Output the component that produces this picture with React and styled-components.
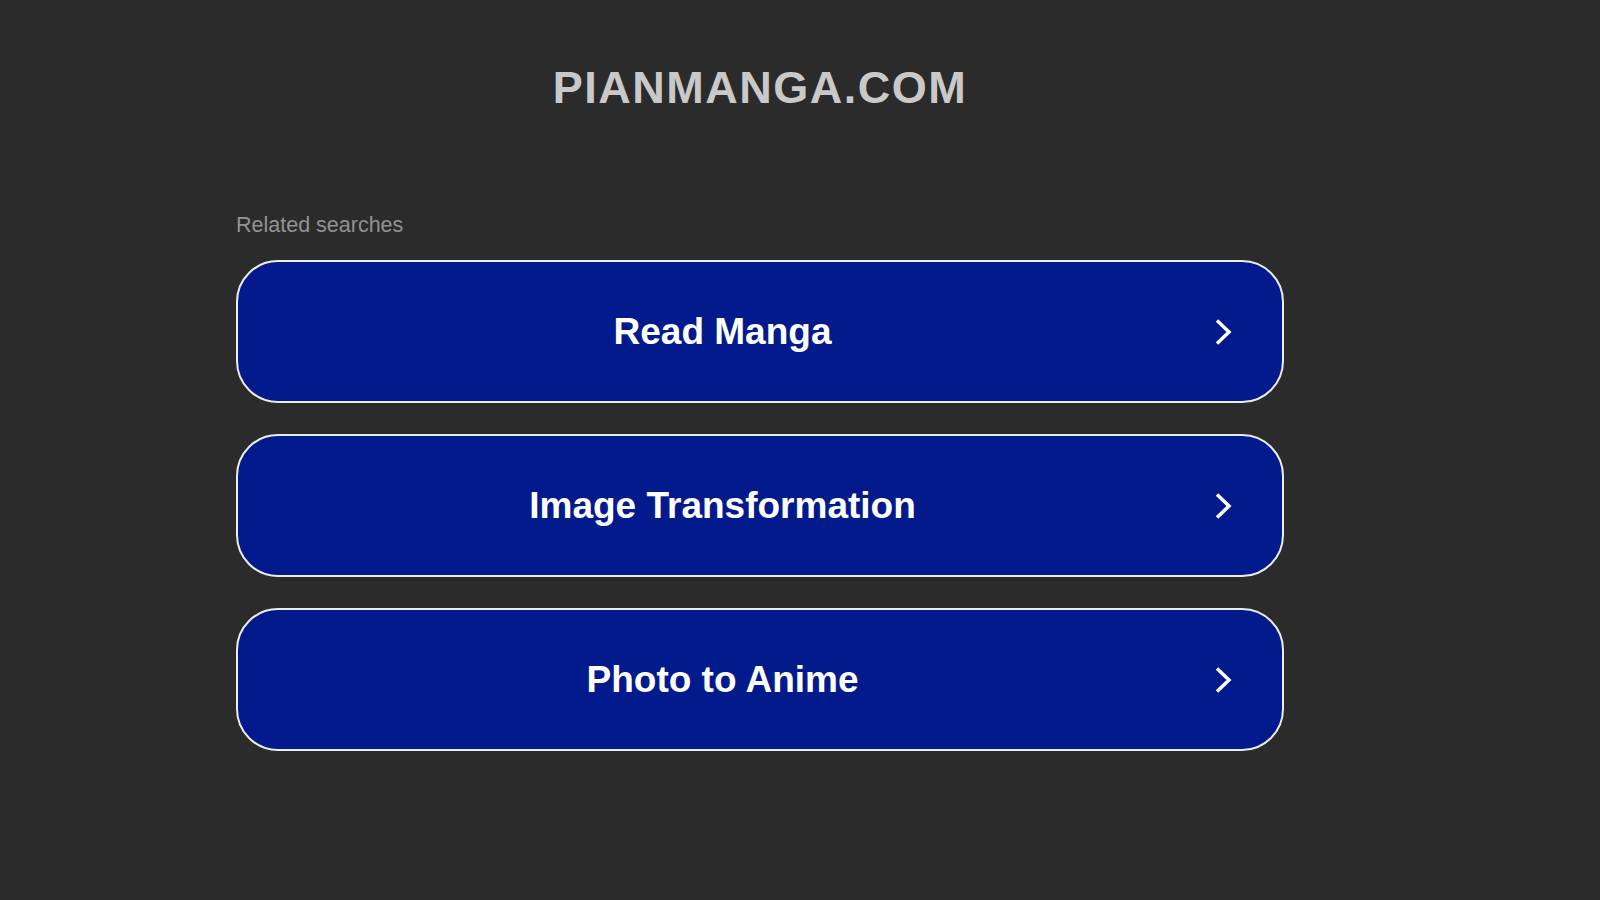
import React from "react";
import styled, { createGlobalStyle } from "styled-components";

const GlobalStyle = createGlobalStyle`
  html, body {
    margin: 0;
    padding: 0;
    background: #2b2b2b;
  }
  body {
    font-family: "Liberation Sans", Arial, sans-serif;
  }
`;

const searches = ["Read Manga", "Image Transformation", "Photo to Anime"];

const App = () => {
  return (
    <>
      <GlobalStyle />
      <Page>
        <Container>
          <Title>PIANMANGA.COM</Title>
          <Related>Related searches</Related>
          <List>
            {searches.map((s) => (
              <SearchButton key={s} href="#">
                <Label>{s}</Label>
                <Arrow viewBox="0 0 22 30" width="22" height="30">
                  <polyline
                    points="4,3.5 16,15 4,26.5"
                    fill="none"
                    stroke="#fff"
                    strokeWidth="3.5"
                  />
                </Arrow>
              </SearchButton>
            ))}
          </List>
        </Container>
      </Page>
    </>
  );
};

const Page = styled.div`
  min-height: 900px;
  padding-right: 80px;
  display: flex;
  justify-content: center;
`;

const Container = styled.div`
  width: 1048px;
  display: flex;
  flex-direction: column;
`;

const Title = styled.h1`
  margin: 62px 0 0;
  font-size: 45px;
  line-height: 52px;
  font-weight: 700;
  letter-spacing: 1.5px;
  color: #c9c9c9;
  text-align: center;
`;

const Related = styled.div`
  margin-top: 99px;
  font-size: 21.5px;
  line-height: 25px;
  color: #929292;
`;

const List = styled.div`
  margin-top: 22px;
  display: flex;
  flex-direction: column;
  gap: 31px;
`;

const SearchButton = styled.a`
  box-sizing: border-box;
  height: 143px;
  display: flex;
  align-items: center;
  background: #021a8b;
  border: 2px solid #ececec;
  border-radius: 42px;
  text-decoration: none;
`;

const Label = styled.span`
  flex: 1;
  text-align: center;
  color: #fff;
  font-size: 37px;
  font-weight: 700;
`;

const Arrow = styled.svg`
  flex: none;
  margin: 0 47px 0 6px;
`;

export default App;
